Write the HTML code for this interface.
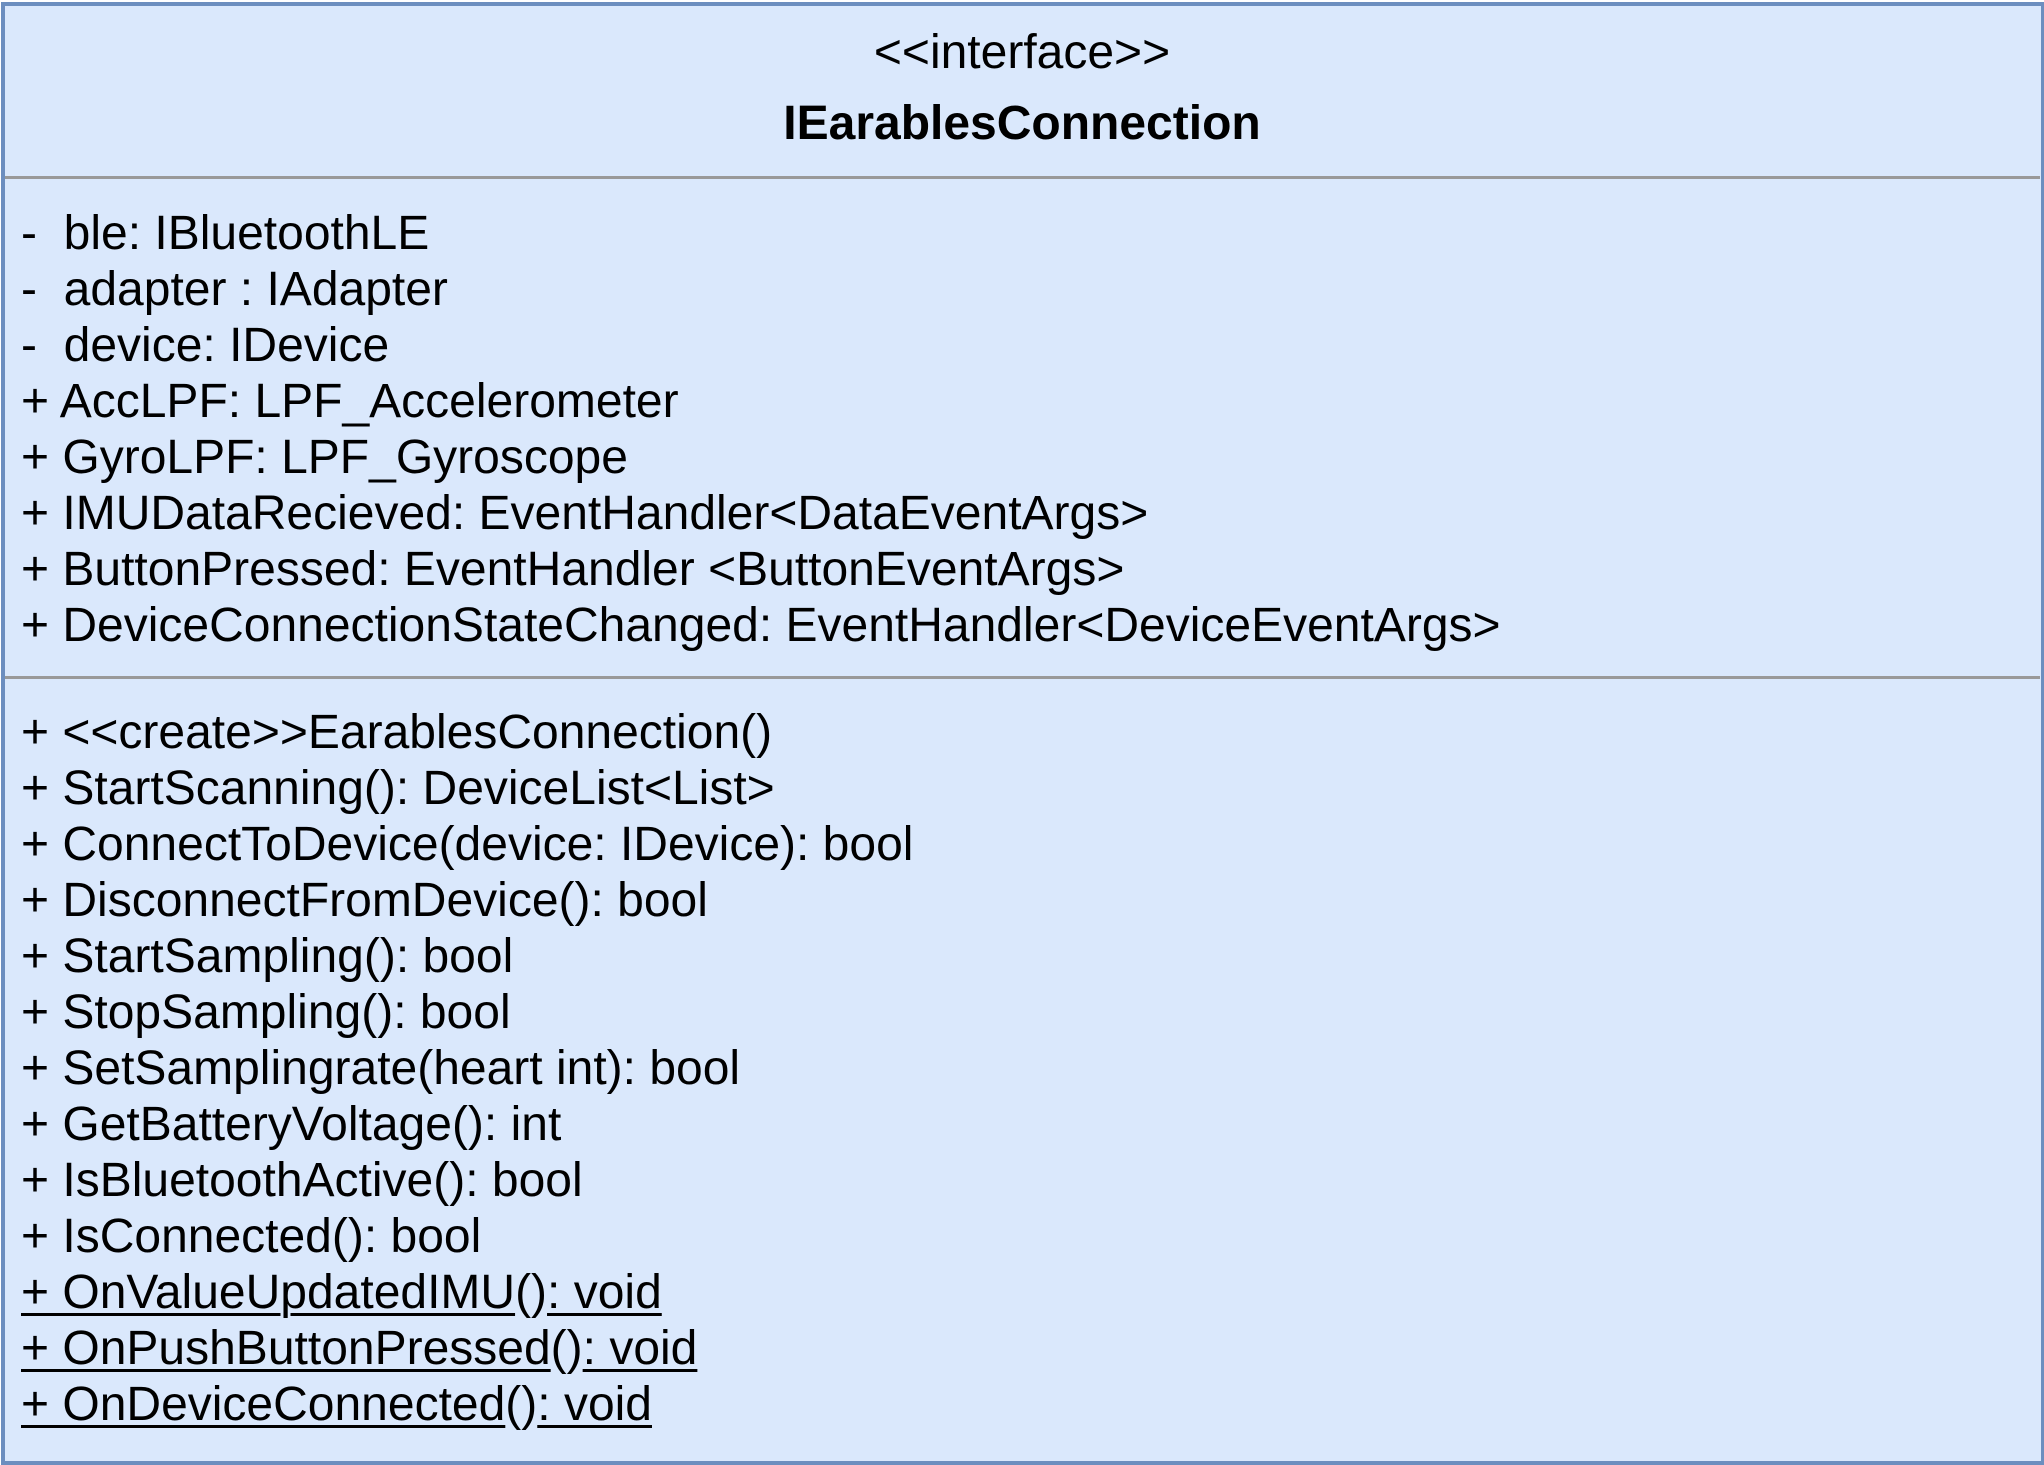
<!DOCTYPE html>
<html><head><meta charset="utf-8"><style>
html,body{margin:0;padding:0;}
body{width:2044px;height:1464px;position:relative;overflow:hidden;background:#fff;font-family:"Liberation Sans",Arial,sans-serif;color:#000;}
.box{position:absolute;left:1px;top:2px;width:2036px;height:1455px;background:#dae8fc;border:4px solid #6c8ebf;}
.div{position:absolute;left:5px;width:2035px;height:3px;background:#999;}
.t{position:absolute;left:0;width:2044px;text-align:center;font-size:48px;line-height:56px;}
.l{position:absolute;left:21px;font-size:48px;line-height:56px;white-space:pre;}
u{text-decoration:underline;text-decoration-thickness:3px;text-underline-offset:5px;}
</style></head><body>
<div class="box"></div>
<div class="t" style="top:25px">&lt;&lt;interface&gt;&gt;</div>
<div class="t" style="top:96px;font-weight:bold">IEarablesConnection</div>
<div class="div" style="top:176px"></div>
<div class="div" style="top:676px"></div>
<div class="l" style="top:206px">-  ble: IBluetoothLE
-  adapter : IAdapter
-  device: IDevice
+ AccLPF: LPF_Accelerometer
+ GyroLPF: LPF_Gyroscope
+ IMUDataRecieved: EventHandler&lt;DataEventArgs&gt;
+ ButtonPressed: EventHandler &lt;ButtonEventArgs&gt;
+ DeviceConnectionStateChanged: EventHandler&lt;DeviceEventArgs&gt;</div>
<div class="l" style="top:705px">+ &lt;&lt;create&gt;&gt;EarablesConnection()
+ StartScanning(): DeviceList&lt;List&gt;
+ ConnectToDevice(device: IDevice): bool
+ DisconnectFromDevice(): bool
+ StartSampling(): bool
+ StopSampling(): bool
+ SetSamplingrate(heart int): bool
+ GetBatteryVoltage(): int
+ IsBluetoothActive(): bool
+ IsConnected(): bool
<u>+ OnValueUpdatedIMU</u>()<u>: void</u>
<u>+ OnPushButtonPressed</u>()<u>: void</u>
<u>+ OnDeviceConnected</u>()<u>: void</u></div>
</body></html>
